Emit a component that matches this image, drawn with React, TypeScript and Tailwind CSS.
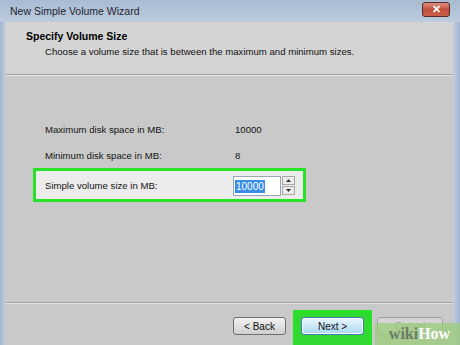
import React from "react";

const font = { fontFamily: '"Liberation Sans", Arial, sans-serif' };

function SpinArrow({ up }: { up?: boolean }) {
  return (
    <svg width="5" height="3" viewBox="0 0 5 3">
      <path d={up ? "M0 3 L2.5 0 L5 3 Z" : "M0 0 L2.5 3 L5 0 Z"} fill="#333" />
    </svg>
  );
}

export default function App() {
  return (
    <div
      className="relative w-[460px] h-[345px] overflow-hidden flex flex-col bg-[#b8c7da]"
      style={font}
    >
      {/* Title bar */}
      <div className="h-[22px] flex items-center justify-between pl-[10px] pr-[10px] bg-gradient-to-b from-[#a9bbd2] to-[#bccbdd] shrink-0">
        <span className="text-[10.5px] text-[#1e2530] leading-none pt-[1px]">
          New Simple Volume Wizard
        </span>
        <div className="w-[28px] h-[15px] mt-[-4px] rounded-[3px] border border-[#5a2a25] bg-gradient-to-b from-[#dc8f80] via-[#c2503c] to-[#c8604c] flex items-center justify-center">
          <span className="text-white text-[11px] font-bold leading-none">✕</span>
        </div>
      </div>

      {/* Frame + content */}
      <div className="flex flex-1 min-h-0">
        <div className="w-[6px] bg-gradient-to-r from-[#a2b4cf] to-[#c6d0de] shrink-0" />
        <div className="flex-1 flex flex-col bg-[#c9c9c9]">
          {/* Header */}
          <div className="h-[52px] bg-[#d4d4d4] pl-[20px] pt-[8px] shrink-0">
            <div className="text-[10.5px] font-bold text-black leading-[13px]">
              Specify Volume Size
            </div>
            <div className="text-[9.6px] text-[#111] leading-[13px] pl-[19px] pt-[2px]">
              Choose a volume size that is between the maximum and minimum sizes.
            </div>
          </div>
          <div className="h-px bg-[#a3a3a3]" />
          <div className="h-px bg-[#e6e6e6]" />

          {/* Body */}
          <div className="flex-1 flex flex-col pt-[41px] text-[9.6px] text-[#141414]">
            <div className="h-[26px] flex items-center pl-[39px]">
              <span className="w-[190px]">Maximum disk space in MB:</span>
              <span>10000</span>
            </div>
            <div className="h-[26px] flex items-center pl-[39px]">
              <span className="w-[190px]">Minimum disk space in MB:</span>
              <span>8</span>
            </div>
            <div className="ml-[27px] w-[273px] h-[34px] mt-[-1px] border-[3px] border-[#27e227] bg-[#ececec] flex items-start pl-[9px] pt-[5px]">
              <span className="w-[188px] pt-[3px]">Simple volume size in MB:</span>
              <div className="flex items-start">
                <div className="w-[48px] h-[20px] border border-[#9aa7b6] bg-white flex items-center pl-[1px]">
                  <span className="bg-[#3a8ee6] text-white px-[1px] text-[10px] leading-[13px]">10000</span>
                </div>
                <div className="flex flex-col gap-[1px] ml-[1px]">
                  <div className="w-[13px] h-[9px] border border-[#a8a8a8] bg-[#ececec] flex items-center justify-center">
                    <SpinArrow up />
                  </div>
                  <div className="w-[13px] h-[9px] border border-[#a8a8a8] bg-[#ececec] flex items-center justify-center">
                    <SpinArrow />
                  </div>
                </div>
              </div>
            </div>
          </div>

          <div className="h-px bg-[#a3a3a3]" />
          <div className="h-px bg-[#e0e0e0]" />

          {/* Footer */}
          <div className="h-[41px] flex justify-end items-start pr-[10px] pt-[6px] shrink-0 text-[10px]">
            <div className="w-[53px] h-[18px] mt-[7px] rounded-[3px] border border-[#707070] bg-gradient-to-b from-[#f2f2f2] to-[#cfcfcf] flex items-center justify-center text-[#111]">
              &lt; Back
            </div>
            <div className="ml-[7px] w-[79px] h-[40px] border-[3px] border-[#27e227] bg-[#30d830] pl-[5px] pt-[4px]">
              <div className="w-[63px] h-[18px] rounded-[3px] border border-[#3c7fb1] bg-gradient-to-b from-[#eaf6fd] to-[#a9d8f3] flex items-center justify-center text-[#111] shadow-[inset_0_0_0_1px_#ffffff]">
                Next &gt;
              </div>
            </div>
            <div className="ml-[5px] w-[66px] h-[18px] mt-[7px] rounded-[3px] border border-[#9da2a6] bg-[#d4d4d4] flex items-center justify-center text-[#a0a0a0]">
              Cancel
            </div>
          </div>
        </div>
        <div className="w-[7px] bg-gradient-to-r from-[#c4cfdd] to-[#9fb2cf] shrink-0" />
      </div>

      {/* wikiHow watermark */}
      <div className="absolute right-0 bottom-0 w-[85px] h-[22px] bg-[#9ccc7ecc] flex items-center justify-center pl-[4px]">
        <span
          className="text-[16px] font-bold leading-none"
          style={{ fontFamily: '"Liberation Serif", "Times New Roman", serif' }}
        >
          <span className="text-[#6d7a66]">wiki</span>
          <span className="text-white">How</span>
        </span>
      </div>
    </div>
  );
}
